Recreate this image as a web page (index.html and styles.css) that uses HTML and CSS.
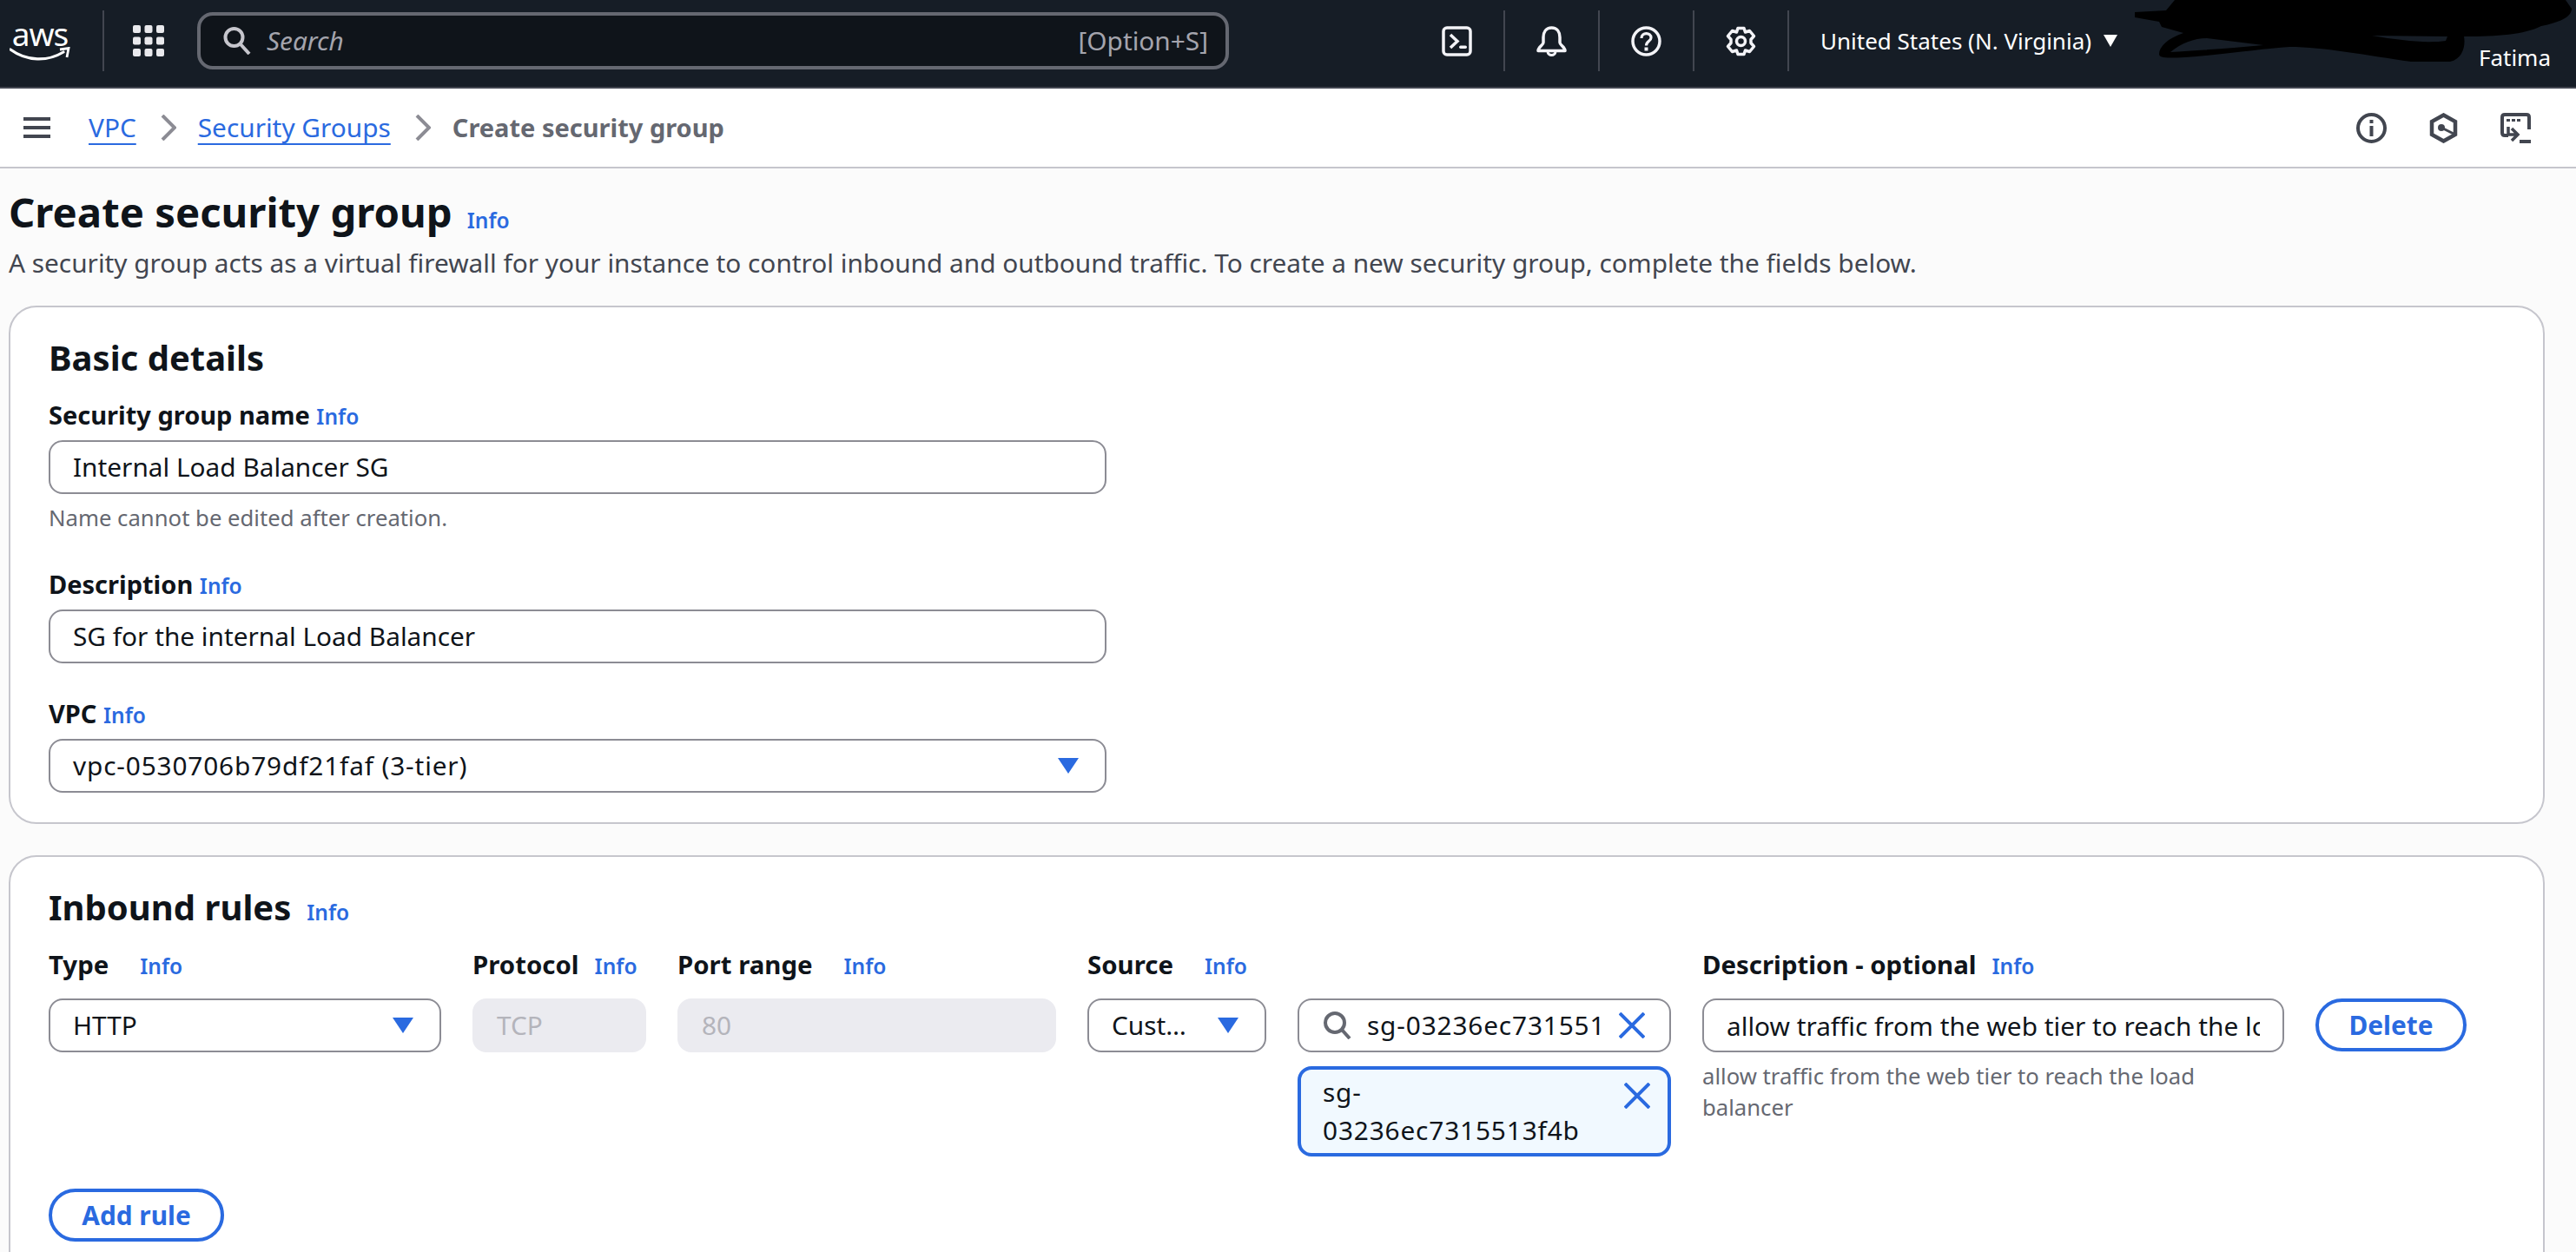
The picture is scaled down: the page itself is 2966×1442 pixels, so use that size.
FILE: index.html
```html
<!DOCTYPE html>
<html lang="en">
<head>
<meta charset="utf-8">
<title>Create security group</title>
<link rel="stylesheet" href="styles.css">
</head>
<body>
<header class="topbar">
  <div class="logo"><span class="logo-text">aws</span>
    <svg class="logo-smile" viewBox="0 0 70 16"><path d="M1 3C20 17 44 17 62 6" fill="none" stroke="#fff" stroke-width="3.200" stroke-linecap="round"/><path d="M58 3L68 1.500L66 12" fill="none" stroke="#fff" stroke-width="2.800"/></svg>
  </div>
  <span class="tdiv tdiv-logo"></span>
  <svg class="grid-ic" viewBox="0 0 36 36"><g fill="#e9e9ed"><rect x="0" y="0" width="9" height="9" rx="2"/><rect x="13.500" y="0" width="9" height="9" rx="2"/><rect x="27" y="0" width="9" height="9" rx="2"/><rect x="0" y="13.500" width="9" height="9" rx="2"/><rect x="13.500" y="13.500" width="9" height="9" rx="2"/><rect x="27" y="13.500" width="9" height="9" rx="2"/><rect x="0" y="27" width="9" height="9" rx="2"/><rect x="13.500" y="27" width="9" height="9" rx="2"/><rect x="27" y="27" width="9" height="9" rx="2"/></g></svg>
  <div class="search">
    <svg class="search-ic" viewBox="0 0 32 32"><circle cx="12.500" cy="12" r="10" fill="none" stroke="#c6c6cd" stroke-width="4"/><path d="M20 20L30 31" stroke="#c6c6cd" stroke-width="4"/></svg>
    <span class="search-ph">Search</span>
    <span class="search-key">[Option+S]</span>
  </div>
  <div class="tools">
    <svg class="tool" viewBox="0 0 35 35"><rect x="2" y="2" width="31" height="31" rx="4" fill="none" stroke="#f3f3f7" stroke-width="3.500"/><path d="M10 10L18 17.500L10 25" fill="none" stroke="#f3f3f7" stroke-width="3.500"/><rect x="20" y="22.500" width="9" height="3.500" rx="1.700" fill="#f3f3f7"/></svg>
    <span class="tdiv"></span>
    <svg class="tool" viewBox="0 0 35 35"><path d="M17.500 2C11 2 8 7 8 13V19C8 22 2 24 2 28.500H33C33 24 27 22 27 19V13C27 7 24 2 17.500 2Z" fill="none" stroke="#f3f3f7" stroke-width="3.500" stroke-linejoin="round"/><path d="M13 29C13 35 22 35 22 29" fill="none" stroke="#f3f3f7" stroke-width="3"/></svg>
    <span class="tdiv"></span>
    <svg class="tool" viewBox="0 0 35 35"><circle cx="17.500" cy="17.500" r="15.500" fill="none" stroke="#f3f3f7" stroke-width="3.500"/><path d="M12 14C12 7 23 7 23 13.500C23 17.500 17.500 17 17.500 22.500" fill="none" stroke="#f3f3f7" stroke-width="3.200"/><rect x="15.500" y="24.500" width="4" height="4" fill="#f3f3f7"/></svg>
    <span class="tdiv"></span>
    <svg class="tool" viewBox="0 0 35 35"><circle cx="17.500" cy="17.500" r="5" fill="none" stroke="#f3f3f7" stroke-width="3.500"/><path d="M14 2.500H21L22.500 7L27.500 5.500L32.500 11.500L29 15.500V19.500L32.500 23.500L27.500 29.500L22.500 28L21 32.500H14L12.500 28L7.500 29.500L2.500 23.500L6 19.500V15.500L2.500 11.500L7.500 5.500L12.500 7Z" fill="none" stroke="#f3f3f7" stroke-width="3.500" stroke-linejoin="round"/></svg>
    <span class="tdiv"></span>
  </div>
  <span class="region">United States (N. Virginia)</span>
  <span class="caret-white"></span>
  <span class="account">Fatima</span>
  <svg class="scribble" viewBox="0 0 510 72"><path fill-rule="evenodd" fill="#000" d="M48 0L38 12L2 14L2 20L30 25L33 31L58 38C40 44 30 54 30 62C30 67 38 67 60 66C110 62 150 56 180 54C220 54 270 64 320 71H365C380 68 383 52 381 42C420 42 450 40 470 30C490 26 505 20 505 10L498 0ZM43 60C55 50 70 44 85 44L150 52C110 56 70 58 43 60ZM275 41L362 42L360 47C340 50 310 47 275 41Z"/></svg>
</header>
<nav class="crumbbar">
  <span class="burger"><i></i><i></i><i></i></span>
  <a class="crumb crumb-first">VPC</a>
  <svg class="chev" viewBox="0 0 18 30"><path d="M2 1L16 15L2 29" fill="none" stroke="#8c8c94" stroke-width="4"/></svg>
  <a class="crumb">Security Groups</a>
  <svg class="chev" viewBox="0 0 18 30"><path d="M2 1L16 15L2 29" fill="none" stroke="#8c8c94" stroke-width="4"/></svg>
  <span class="crumb-now">Create security group</span>
  <div class="crumb-tools">
    <svg class="ctool" viewBox="0 0 35 35"><circle cx="17.500" cy="17.500" r="15.500" fill="none" stroke="#424650" stroke-width="4"/><rect x="15.500" y="15" width="4" height="12" fill="#424650"/><rect x="15.500" y="8" width="4" height="4" fill="#424650"/></svg>
    <svg class="ctool" viewBox="0 0 35 35"><path d="M17.500 2.500L31 10V25L17.500 32.500L4 25V10Z" fill="none" stroke="#424650" stroke-width="4.500"/><circle cx="15" cy="17" r="4" fill="#424650"/><path d="M15 17L29 24" stroke="#424650" stroke-width="3"/></svg>
    <svg class="ctool" viewBox="0 0 35 35"><path d="M9 26H5Q2 26 2 23V5Q2 2 5 2H30Q33 2 33 5V19" fill="none" stroke="#424650" stroke-width="4"/><g fill="#424650"><rect x="7" y="7" width="4" height="3"/><rect x="13" y="7" width="4" height="3"/><rect x="19" y="7" width="4" height="3"/><rect x="22" y="31" width="13" height="4"/></g><path d="M9 16V25H20M13 18L20 25L13 32" fill="none" stroke="#424650" stroke-width="3.500"/></svg>
  </div>
</nav>
<main class="page">
  <div class="title-row"><h1 class="title">Create security group</h1><a class="info info-title">Info</a></div>
  <p class="lead">A security group acts as a virtual firewall for your instance to control inbound and outbound traffic. To create a new security group, complete the fields below.</p>
  <section class="card card-basic">
    <h2 class="card-h">Basic details</h2>
    <div class="label label-first">Security group name <a class="info">Info</a></div>
    <div class="field field-wide">Internal Load Balancer SG</div>
    <div class="hint hint-name">Name cannot be edited after creation.</div>
    <div class="label label-next">Description <a class="info">Info</a></div>
    <div class="field field-wide">SG for the internal Load Balancer</div>
    <div class="label label-next">VPC <a class="info">Info</a></div>
    <div class="field field-wide field-select"><span class="num">vpc-0530706b79df21faf (3-tier)</span><span class="caret-blue"></span></div>
  </section>
  <section class="card card-rules">
    <div class="rules-head"><h2 class="card-h">Inbound rules</h2><a class="info">Info</a></div>
    <div class="rule-grid">
      <div class="rlabel">Type<a class="info info-gap">Info</a></div>
      <div class="rlabel">Protocol<a class="info info-gap-s">Info</a></div>
      <div class="rlabel">Port range<a class="info info-gap">Info</a></div>
      <div class="rlabel">Source<a class="info info-gap">Info</a></div>
      <div></div>
      <div class="rlabel">Description - optional<a class="info info-gap-s">Info</a></div>
      <div></div>
      <div class="field field-select">HTTP<span class="caret-blue"></span></div>
      <div class="field field-off">TCP</div>
      <div class="field field-off">80</div>
      <div class="field field-select">Cust…<span class="caret-blue"></span></div>
      <div class="col-source">
        <div class="field field-search">
          <svg class="fs-ic" viewBox="0 0 32 32"><circle cx="13" cy="13" r="11" fill="none" stroke="#656871" stroke-width="4"/><path d="M21 21L30 31" stroke="#656871" stroke-width="4"/></svg>
          <span class="fs-text num">sg-03236ec731551</span>
          <svg class="x-ic" viewBox="0 0 30 30"><path d="M1 1L29 29M29 1L1 29" stroke="#2a6ae0" stroke-width="4"/></svg>
        </div>
        <div class="token"><span class="token-text num">sg-<br>03236ec7315513f4b</span>
          <svg class="x-ic" viewBox="0 0 30 30"><path d="M1 1L29 29M29 1L1 29" stroke="#2a6ae0" stroke-width="4"/></svg>
        </div>
      </div>
      <div class="col-desc">
        <input class="field field-input" type="text" readonly value="allow traffic from the web tier to reach the load balancer">
        <div class="hint hint-desc">allow traffic from the web tier to reach the load balancer</div>
      </div>
      <button class="btn btn-del">Delete</button>
    </div>
    <button class="btn btn-add">Add rule</button>
  </section>
</main>
</body>
</html>
```
FILE: styles.css
```css
* { box-sizing: border-box; }
html, body { margin: 0; height: 100%; overflow: hidden; }
body { font-family: "Noto Sans", "Open Sans", sans-serif; font-size: 29.8px; line-height: 40px; color: #0f141a; background: #fbfbfb; }
a { color: #2a6ae0; }
.topbar { position: relative; height: 102px; padding-bottom: 6px; background: #161d26; border-bottom: 2px solid #424650; display: flex; align-items: center; color: #fff; overflow: hidden; }
.logo { width: 68px; margin-left: 12px; display: flex; flex-direction: column; align-items: center; }
.logo-text { font-size: 37px; line-height: 28px; letter-spacing: -1px; color: #fff; }
.logo-smile { width: 70px; height: 16px; margin-top: 1px; }
.tdiv { width: 2px; height: 70px; background: #424650; flex: none; }
.tdiv-logo { margin-left: 38px; }
.grid-ic { width: 36px; height: 36px; margin-left: 33px; flex: none; }
.search { width: 1188px; height: 66px; margin-left: 38px; background: #0f141a; border: 4px solid #656871; border-radius: 18px; display: flex; align-items: center; padding: 0 20px 0 26px; }
.search-ic { width: 32px; height: 32px; flex: none; }
.search-ph { font-style: italic; color: #a4a4ad; margin-left: 18px; flex: 1; }
.search-key { color: #a4a4ad; }
.tools { display: flex; align-items: center; margin-left: 245px; }
.tool { width: 35px; height: 35px; flex: none; margin: 0 36px 0 0; }
.tools .tdiv { margin-right: 36px; }
.region { font-size: 26px; color: #fff; }
.caret-white { width: 0; height: 0; border-left: 8px solid transparent; border-right: 8px solid transparent; border-top: 14px solid #fff; margin-left: 14px; }
.account { position: absolute; right: 29px; top: 46px; font-size: 26px; line-height: 40px; color: #fff; }
.scribble { position: absolute; left: 2456px; top: 0; width: 510px; height: 72px; }
.crumbbar { height: 92px; background: #fff; border-bottom: 2px solid #c6c6cd; display: flex; align-items: center; padding: 0 52px 0 27px; }
.burger { width: 31px; height: 24px; display: flex; flex-direction: column; justify-content: space-between; }
.burger i { display: block; height: 4px; background: #424650; }
.crumb { color: #2a6ae0; text-decoration: underline; text-underline-offset: 7px; text-decoration-thickness: 2px; }
.crumb-first { margin-left: 44px; }
.chev { width: 18px; height: 30px; margin: 0 25px 0 28px; flex: none; }
.crumb-now { font-size: 29px; font-weight: 700; color: #656871; }
.crumb-tools { margin-left: auto; display: flex; gap: 48px; }
.ctool { width: 35px; height: 35px; }
.page { padding: 0 36px 0 10px; }
.title-row { display: flex; align-items: baseline; gap: 17px; margin-top: 20px; }
.title { margin: 0; font-size: 47.3px; line-height: 60px; font-weight: 700; }
.info { font-size: 24.5px; font-weight: 600; text-decoration: none; }
.info-title { position: relative; top: 1px; }
.lead { margin: 9px 0 0; line-height: 40px; color: #424650; }
.card { background: #fff; border: 2px solid #c6c6cd; border-radius: 32px; padding: 28px 44px 0; }
.card-basic { height: 597px; margin-top: 29px; }
.card-rules { height: 600px; margin-top: 36px; }
.card-h { margin: 0; font-size: 40px; line-height: 60px; font-weight: 700; }
.label { font-size: 29px; font-weight: 700; line-height: 40px; }
.label-first { margin-top: 16px; }
.label-next { margin-top: 38px; }
.field { height: 62px; border: 2px solid #8c8c94; border-radius: 16px; background: #fff; padding: 0 26px; display: flex; align-items: center; white-space: nowrap; }
.field-wide { width: 1218px; margin-top: 7px; }
.field-select { justify-content: space-between; padding-right: 30px; }
.caret-blue { width: 0; height: 0; border-left: 12px solid transparent; border-right: 12px solid transparent; border-top: 18px solid #2a6ae0; }
.num { letter-spacing: 0.85px; }
.hint { font-size: 25.7px; line-height: 36px; color: #656871; }
.hint-name { margin-top: 10px; }
.rules-head { display: flex; align-items: baseline; gap: 18px; }
.rule-grid { display: grid; grid-template-columns: 452px 200px 436px 206px 430px 670px 174px; column-gap: 36px; margin-top: 16px; align-items: start; }
.rlabel { font-size: 29.4px; font-weight: 700; line-height: 40px; margin-bottom: 17px; white-space: nowrap; }
.info-gap { margin-left: 36px; }
.info-gap-s { margin-left: 18px; }
.field-off { background: #ebebf0; border-color: #ebebf0; color: #b4b4bb; }
.field-search { padding: 0 28px; }
.fs-ic { width: 32px; height: 32px; flex: none; }
.fs-text { margin-left: 18px; flex: 1; overflow: hidden; }
.x-ic { width: 30px; height: 30px; flex: none; }
.token { margin-top: 16px; height: 104px; border: 4px solid #2a6ae0; border-radius: 16px; background: #f1f9ff; padding: 4px 20px 0 25px; display: flex; justify-content: space-between; line-height: 44px; }
.token .x-ic { margin-top: 11px; }
.field-input { display: block; width: 100%; font: inherit; color: inherit; outline: none; }
.hint-desc { margin-top: 10px; }
.btn { height: 61px; border: 4px solid #2a6ae0; border-radius: 40px; background: #fff; color: #2a6ae0; font: 700 29.8px/40px "Noto Sans", "Open Sans", sans-serif; padding: 0; }
.btn-add { width: 202px; margin-top: 37px; display: block; }
.btn-del { width: 174px; }
```
